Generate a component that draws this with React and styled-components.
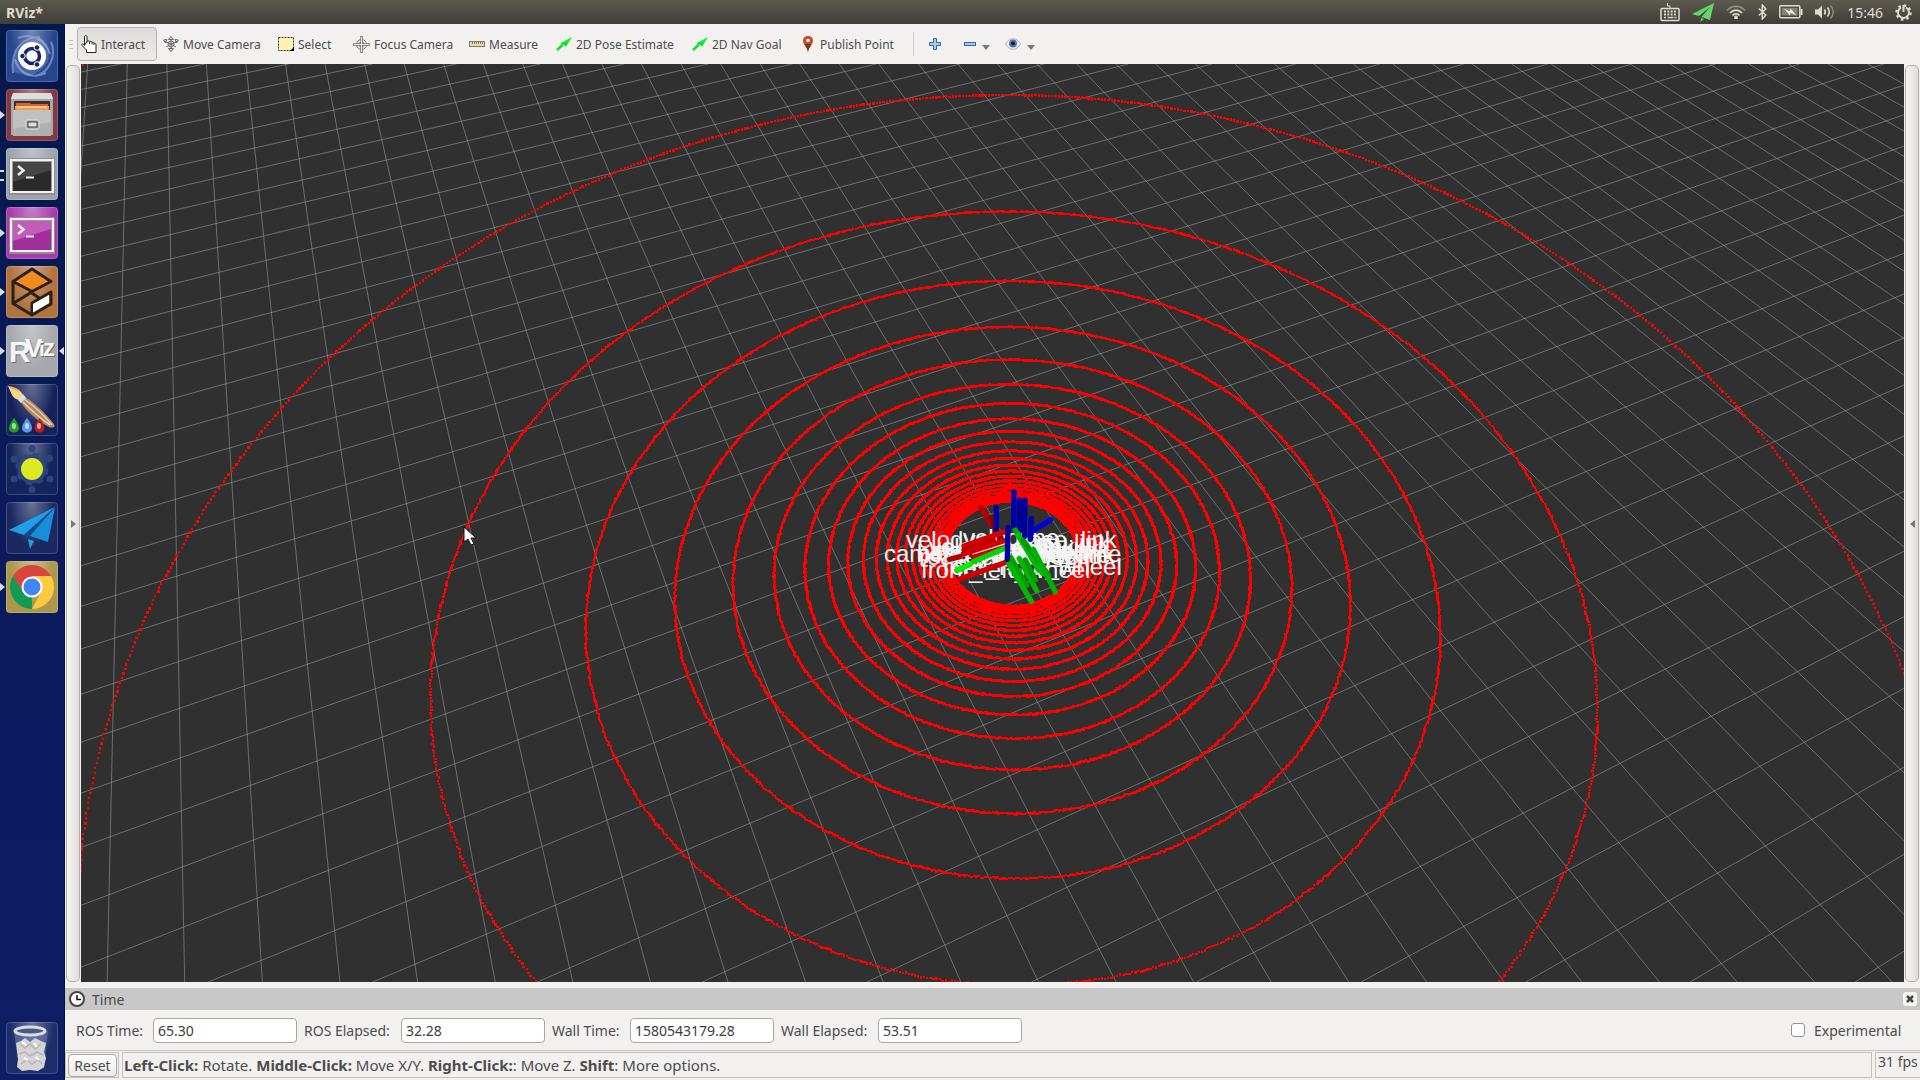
import styled, { createGlobalStyle, css } from 'styled-components';

const GlobalStyle = createGlobalStyle`
  * {
    box-sizing: border-box;
  }

  body {
    margin: 0;
    overflow: hidden;
    background: #f2f1f0;
    color: #4c4c4c;
    font-family: 'Noto Sans', 'Open Sans', sans-serif;
    font-size: 14px;
  }

  button, input {
    font: inherit;
    color: inherit;
  }
`;

/* ---------- scene maths ---------- */

const SCENE_W = 1823;
const SCENE_H = 918;
const FOCAL = 1109;
const SIN_P = 0.7866;
const COS_P = 0.6175;
const HORIZON = -954;

// ground point (x right, z forward, camera height 1) to screen
const project = (x, z) => {
  const depth = z * COS_P + SIN_P;
  return [
    911.5 + (FOCAL * x) / depth,
    459 + (FOCAL * (COS_P - z * SIN_P)) / depth,
  ];
};

const noise = (n) => {
  const s = Math.sin(n * 12.9898) * 43758.5453;
  return s - Math.floor(s) - 0.5;
};

const gridFamily = (vanishX, step, offset, from, to) => {
  let d = '';
  for (let i = from; i <= to; i += 1) {
    const k = step * i + offset;
    const top = vanishX + (0 - HORIZON) * k;
    const bottom = vanishX + (SCENE_H - HORIZON) * k;
    d += `M${top.toFixed(1)} 0L${bottom.toFixed(1)} ${SCENE_H}`;
  }
  return d;
};

const GRID =
  gridFamily(67.3, 0.04146, -0.02201, -3, 48) +
  gridFamily(4742, 0.08799, -2.4653, -31, 12);

const BEAMS = 23;
const POINTS = 1080;

const buildCloud = () => {
  let d = '';
  for (let beam = 0; beam < BEAMS; beam += 1) {
    const angle = ((beam + 1) * 4 * Math.PI) / 540;
    const radius = 1 / (22.94 * Math.tan(angle));
    for (let p = 0; p < POINTS; p += 1) {
      const a = (p * 2 * Math.PI) / POINTS;
      const r = radius + noise(beam * POINTS + p) * 0.0016;
      const [x, y] = project(0.0218 + r * Math.sin(a), 0.744 + r * Math.cos(a));
      if (x > -3 && x < SCENE_W + 3 && y > -3 && y < SCENE_H + 3) {
        d += `M${(x - 1.2).toFixed(1)} ${y.toFixed(1)}h2.4`;
      }
    }
  }
  return d;
};

const CLOUD = buildCloud();

const AXES = [
  ['#b80000', 362, 112, 395, 165],
  ['#8a0000', 392, 142, 420, 205],
  ['#0000a8', 409, 114, 409, 176],
  ['#0000d8', 522, 180, 571, 150],
  ['#0000a0', 478, 90, 478, 176],
  ['#0000a8', 495, 90, 493, 200],
  ['#000090', 486, 100, 486, 180],
  ['#0000b0', 514, 146, 511, 208],
  ['#0000a8', 462, 66, 461, 170],
  ['#d80000', 312, 228, 438, 184],
  ['#c00000', 312, 240, 400, 210],
  ['#d00000', 310, 252, 432, 212],
  ['#b00000', 268, 268, 300, 260],
  ['#c80000', 340, 262, 436, 232],
  ['#00d800', 340, 275, 436, 234],
  ['#00f000', 292, 300, 330, 284],
  ['#d00000', 298, 328, 440, 276],
  ['#00a800', 466, 180, 536, 300],
  ['#00c000', 474, 196, 548, 310],
  ['#009800', 490, 212, 566, 316],
  ['#00b000', 520, 238, 586, 366],
  ['#00a000', 452, 262, 500, 346],
  ['#00b800', 478, 266, 530, 362],
  ['#009c00', 496, 270, 526, 330],
  ['#00b800', 446, 280, 514, 394],
  ['#0000a0', 444, 172, 442, 268],
];

const FRAMES = [
  ['velodyne_base_link', 825, 484],
  ['velodyne', 882, 482],
  ['velodyne_link', 848, 491],
  ['imu_link', 941, 487],
  ['camera_optical_frame', 803, 498],
  ['base_footprint', 836, 497],
  ['camera_link', 899, 495],
  ['base_link', 932, 499],
  ['gps_link', 930, 493],
  ['rear_left_wheel', 838, 501],
  ['rear_axle_frame', 855, 499],
  ['steering_wheel', 850, 495],
  ['front_left_wheel', 840, 514],
  ['rear_right_wheel', 862, 511],
];

/* ---------- drawings ---------- */

const Scene = () => (
  <SceneSvg
    viewBox={`0 0 ${SCENE_W} ${SCENE_H}`}
    preserveAspectRatio="xMidYMid slice"
    role="img"
    aria-label="3D view"
  >
    <path d={GRID} stroke="#a0a0a4" strokeOpacity="0.55" fill="none" />
    <path d={CLOUD} stroke="#f00" strokeWidth="2.4" fill="none" shapeRendering="crispEdges" />
    <g fill="#f4f4f4" fontFamily="'Liberation Sans', sans-serif" fontSize="24">
      {FRAMES.map(([name, x, y]) => (
        <text key={name} x={x} y={y}>{name}</text>
      ))}
    </g>
    <g transform="translate(779 406) scale(0.3333)" strokeWidth="16" strokeLinecap="round">
      {AXES.map(([color, x1, y1, x2, y2]) => (
        <line key={`${x1}-${y1}`} stroke={color} x1={x1} y1={y1} x2={x2} y2={y2} />
      ))}
    </g>
    <path
      d="M383 463v15l4-3 3 6 3-1-3-6h5z"
      fill="#fff"
      stroke="#111"
      strokeWidth="1"
    />
  </SceneSvg>
);

const HandIcon = () => (
  <svg width="16" height="18" viewBox="0 0 16 18">
    <path
      d="M3.5 10.5V2c0-2 2.500-2 2.500 0v5.500M6 6.500c.5-1.200 2.500-1 2.500.5 .5-1 2.500-.8 2.500.7 .5-.8 2-.6 2 .8 .7-.6 2-.3 2 1.200V17.500H5.500V15L1 10.500c-.8-1.500.8-2.200 2.500-.3z"
      fill="#fff"
      stroke="#222"
    />
    <path d="M8.500 7v2M11 7.500v2M13 8.500v1.500" stroke="#222" />
  </svg>
);

const MoveIcon = () => (
  <svg width="16" height="16" viewBox="0 0 16 16" fill="#e8e8e8" stroke="#666">
    <path d="M8 .5l2.500 3h-5zM8 15.500l-2.500-3h5zM.5 4l3.500-.5L2.500 7zM15.500 4L12 3.500 13.500 7z" />
    <path d="M8 3v10M2 5.500l6 2.500 6-2.500M3 11l5-3 5 3" fill="none" />
    <circle cx="8" cy="8" r="3" fill="none" />
  </svg>
);

const SelectIcon = () => (
  <svg width="16" height="14" viewBox="0 0 16 14">
    <rect x=".5" y=".5" width="15" height="13" fill="#fff3ae" stroke="#333" strokeDasharray="2 1" />
    <path d="M16 10v4h-4z" fill="#000" />
  </svg>
);

const FocusIcon = () => (
  <svg width="17" height="17" viewBox="0 0 17 17" fill="none" stroke="#777">
    <circle cx="8.500" cy="8.500" r="5" />
    <circle cx="8.500" cy="8.500" r="2.500" />
    <path d="M8.500 0v17M0 8.500h17" strokeWidth="2.500" />
    <path d="M8.500 1v15M1 8.500h15" stroke="#e8e8e8" />
  </svg>
);

const RulerIcon = () => (
  <svg width="16" height="8" viewBox="0 0 16 8">
    <rect x=".5" y="1.500" width="15" height="5" fill="#e9dca0" stroke="#777" />
    <path d="M3.500 2v2M5.500 2v2M7.500 2v2M9.500 2v2M11.500 2v2M13.500 2v2" stroke="#8a8055" />
  </svg>
);

const ArrowIcon = () => (
  <svg width="16" height="14" viewBox="0 0 16 14">
    <path d="M1 13l6-5.500" stroke="#0be32c" strokeWidth="2.500" />
    <path d="M16 0l-6 10-1.500-2.500L4 6.500z" fill="#0cf030" />
    <path d="M7 6l2 .5.5 2z" fill="#0a6a14" />
  </svg>
);

const PinIcon = () => (
  <svg width="16" height="16" viewBox="0 0 16 16">
    <path d="M8 0c3 0 5 2 5 4.800C13 8.500 9 11 8 16 7 11 3 8.500 3 4.800 3 2 5 0 8 0z" fill="#c94a2c" />
    <path d="M4.500 8C6 10.500 7.500 12 8 16c.5-4 2-5.500 3.500-8z" fill="#6d3a20" />
    <circle cx="8" cy="4.500" r="1.800" fill="#fff" />
  </svg>
);

const PlusIcon = () => (
  <svg width="12" height="12" viewBox="0 0 12 12">
    <path d="M4.500.5h3v4h4v3h-4v4h-3v-4h-4v-3h4z" fill="#a9c8ee" stroke="#3465a4" />
  </svg>
);

const MinusIcon = () => (
  <svg width="12" height="4" viewBox="0 0 12 4">
    <rect x=".5" y=".5" width="11" height="3" fill="#a9c8ee" stroke="#3465a4" />
  </svg>
);

const EyeIcon = () => (
  <svg width="16" height="12" viewBox="0 0 16 12">
    <path d="M.5 6C3 1.500 6 .8 8 .8S13 1.500 15.500 6C13 10.500 10 11.200 8 11.200S3 10.500.5 6z" fill="#eee" stroke="#aaa" />
    <circle cx="8" cy="5.500" r="4" fill="#5a74b0" />
    <circle cx="8" cy="5.500" r="2" fill="#101838" />
  </svg>
);

const ClockIcon = () => (
  <svg width="16" height="16" viewBox="0 0 16 16">
    <circle cx="8" cy="8" r="7" fill="#fff" stroke="#444" strokeWidth="2" />
    <path d="M8 4v4.500h4" stroke="#111" fill="none" strokeWidth="1.500" />
  </svg>
);

const KeyboardIcon = () => (
  <svg width="20" height="20" viewBox="0 0 20 20" fill="none" stroke="#dfdbd2">
    <path d="M10 6V4H7.500V1" />
    <rect x="1" y="6.500" width="18" height="12" rx="1" strokeWidth="1.500" />
    <path d="M4 9.500h12M4 12.500h12" strokeWidth="2" strokeDasharray="2 1.300" />
    <path d="M4 15.500h2M7.500 15.500h6M14.500 15.500h2" strokeWidth="1.500" />
  </svg>
);

const TrayPlaneIcon = () => (
  <svg width="22" height="19" viewBox="0 0 22 19">
    <path d="M22 0L0 11l7 2L18 4 9.500 14l8.500 3zM9 15l-.5 4 3.500-3z" fill="#66d46a" />
  </svg>
);

const WifiIcon = () => (
  <svg width="20" height="14" viewBox="0 0 20 14" fill="none" stroke="#dfdbd2" strokeWidth="1.800">
    <path d="M1 5.500C6 0 14 0 19 5.500" stroke="#8d8a82" />
    <path d="M4 8c3.500-3.800 8.500-3.800 12 0M6.500 10.500c2-2.300 5-2.300 7 0" />
    <circle cx="10" cy="12.500" r="1" fill="#dfdbd2" />
  </svg>
);

const BluetoothIcon = () => (
  <svg width="9" height="16" viewBox="0 0 9 16" fill="none" stroke="#dfdbd2" strokeWidth="1.500">
    <path d="M.8 4.500l7 6.500-3.500 4V1l3.500 4-7 6.500" />
  </svg>
);

const BatteryIcon = () => (
  <svg width="24" height="14" viewBox="0 0 24 14">
    <rect x=".8" y=".8" width="20" height="12" rx="1" fill="none" stroke="#dfdbd2" strokeWidth="1.500" />
    <rect x="3" y="3" width="15.500" height="7.500" fill="#85827a" />
    <path d="M22.500 4v6" stroke="#dfdbd2" strokeWidth="2" />
    <path d="M5 3.500l6 3 .5-3 6 7-6-3-.5 3z" fill="#f0ede6" />
  </svg>
);

const VolumeIcon = () => (
  <svg width="20" height="16" viewBox="0 0 20 16" fill="none" stroke="#dfdbd2" strokeWidth="1.600">
    <path d="M0 5.500h3l4-4v13l-4-4H0z" fill="#dfdbd2" stroke="none" />
    <path d="M9.500 5.500c1 1.500 1 3.500 0 5M12.500 3.500c2.200 2.800 2.200 6.200 0 9" />
    <path d="M15.500 1.500c3.500 4 3.500 9 0 13" stroke="#8d8a82" />
  </svg>
);

const GearIcon = () => (
  <svg width="17" height="17" viewBox="0 0 17 17" fill="none" stroke="#dfdbd2">
    <circle cx="8.500" cy="8.500" r="7" strokeWidth="2.500" strokeDasharray="2.500 3" />
    <path d="M6 3.600a5.500 5.500 0 1 0 5 0" strokeWidth="2" />
    <path d="M8.500 1v7" strokeWidth="2" />
  </svg>
);

const CloseIcon = () => (
  <svg width="8" height="8" viewBox="0 0 8 8">
    <path d="M1 1l6 6M7 1L1 7" stroke="#444" strokeWidth="2.500" />
  </svg>
);

const DashArt = () => (
  <svg viewBox="0 0 52 52">
    <g fill="none" stroke="#9fb4dc" strokeOpacity="0.6">
      <path d="M7 43C4 18 18 7 34 7M45 12c6 14-2 30-15 34M12 8c14-6 28 2 32 16M40 43C24 50 12 42 9 29" strokeWidth="2" />
    </g>
    <path d="M8 42C4 22 18 9 35 8 48 20 46 40 22 46z" fill="#fff" fillOpacity="0.16" />
    <circle cx="26" cy="26" r="14" fill="#fff" />
    <circle cx="26" cy="26" r="7.500" fill="none" stroke="#142a64" strokeWidth="3.500" />
    <g fill="#142a64" stroke="#fff" strokeWidth="1">
      <circle cx="16.500" cy="26" r="2.800" />
      <circle cx="31" cy="17.500" r="2.800" />
      <circle cx="31" cy="34.500" r="2.800" />
    </g>
  </svg>
);

const FilesArt = () => (
  <svg viewBox="0 0 52 52">
    <path d="M7 4h38l2 5v37H5V9z" fill="#a8a8a8" />
    <path d="M7 4h38l2 6H5z" fill="#dedede" />
    <rect x="8" y="12" width="36" height="10" fill="#3a3030" />
    <path d="M10 14h14l1 1h17v7H10z" fill="#d9603a" />
    <path d="M9 17h34v5H9z" fill="#f0a04c" />
    <path d="M11 18h30" stroke="#fff0d0" />
    <rect x="7" y="21" width="38" height="26" fill="#b0b0b0" />
    <path d="M7 21h38v12L7 40z" fill="#c0c0c0" />
    <rect x="20" y="31" width="13" height="9" rx="1" fill="#999" stroke="#e0e0e0" />
    <rect x="22" y="33" width="9" height="5" fill="#ddd" stroke="#444" />
  </svg>
);

const TerminalArt = ({ screen, shine }) => (
  <svg viewBox="0 0 52 52">
    <rect x="3" y="10" width="46" height="37" rx="1" fill="#8f8f8f" />
    <rect x="4" y="11" width="44" height="34" fill="#f2f2f2" />
    <rect x="6" y="13" width="40" height="30" fill="#9a9a9a" />
    <rect x="7" y="14" width="38" height="29" fill={screen} />
    <path d="M7 14h38v8L7 34z" fill={shine} />
    <path d="M12 18l5.500 4.500L12 27" fill="none" stroke="#eee" strokeWidth="2.500" />
    <path d="M20 29.500h8" stroke="#eee" strokeWidth="2" />
  </svg>
);

const GazeboArt = () => (
  <svg viewBox="0 0 52 52" strokeLinejoin="round">
    <path d="M26 3l19 12.500-19 10L7 15.500z" fill="#f58a1f" />
    <path d="M26 3l19 12.500-19 10L7 15.500zM7 15.500v22L26 49M7 37.500l18-11 9 6M26 37v12l19-11V26z" fill="none" stroke="#2a211b" strokeWidth="3" />
    <path d="M27 38l16-9v8l-16 9.500z" fill="#fff" />
  </svg>
);

const RvizArt = () => (
  <svg viewBox="0 0 52 52" fontFamily="'Liberation Sans', sans-serif" fontWeight="bold">
    <g fill="#6f6f6f">
      <text x="4" y="38" fontSize="30">R</text>
      <text x="20" y="33" fontSize="26">V</text>
      <text x="34" y="32" fontSize="21">i</text>
      <text x="38" y="32" fontSize="24">z</text>
    </g>
    <g fill="#f6f6f6">
      <text x="3" y="37" fontSize="30">R</text>
      <text x="19" y="32" fontSize="26">V</text>
      <text x="33" y="31" fontSize="21">i</text>
      <text x="37" y="31" fontSize="24">z</text>
    </g>
  </svg>
);

const BrushArt = () => (
  <svg viewBox="0 0 52 52">
    <path d="M17 12c9 4 22 17 31 28 2 4-2 4-5 3C31 37 20 27 14 17z" fill="#b08a66" />
    <path d="M18 15c9 6 19 15 28 26M17 18c8 8 17 16 27 23" stroke="#e7d2b4" fill="none" strokeWidth="1.500" />
    <path d="M2 2c6 1 12 3 15 9l-4 5C6 15 5 8 2 2z" fill="#f5d58c" />
    <path d="M2 2c6 1 9 2 12 5-5-1-8-2-12-5z" fill="#f5a63c" />
    <path d="M17 10l3 4-5 5-3-3z" fill="#ddd" />
    <path d="M8 34c3 4 5 7 5 10 0 6-10 6-10 0 0-3 2-6 5-10z" fill="#1fa020" />
    <path d="M21 34c3 4 5 7 5 10 0 6-10 6-10 0 0-3 2-6 5-10z" fill="#5a97ee" />
    <path d="M33.500 34c3 4 5 7 5 10 0 6-10 6-10 0 0-3 2-6 5-10z" fill="#b81c22" />
    <g fill="#fff" fillOpacity="0.6">
      <ellipse cx="8" cy="42" rx="2" ry="3" />
      <ellipse cx="21" cy="42" rx="2" ry="3" />
      <ellipse cx="33" cy="42" rx="2" ry="3" />
    </g>
  </svg>
);

const SunArt = () => (
  <svg viewBox="0 0 52 52">
    <g fill="#2c4480">
      <circle cx="26" cy="26" r="14.500" />
      <circle cx="26" cy="26" r="15" fill="none" stroke="#2c4480" strokeWidth="3" strokeDasharray="6 5.800" />
      <circle cx="26" cy="5.500" r="3.500" />
      <circle cx="43.500" cy="15.500" r="3.500" />
      <circle cx="44" cy="36" r="3.500" />
      <circle cx="26" cy="46.500" r="3.500" />
      <circle cx="8" cy="36" r="3.500" />
      <circle cx="8" cy="16" r="3.500" />
    </g>
    <circle cx="26" cy="26" r="11" fill="#dcea20" />
  </svg>
);

const PlaneArt = () => (
  <svg viewBox="0 0 52 52">
    <path d="M49 5L3 28l15 5z" fill="#1f9fe8" />
    <path d="M49 5l-7 35-18-6z" fill="#158fd8" />
    <path d="M49 5L18 33l2 3 3-2z" fill="#0b4f90" />
    <path d="M22 37l6 2-4 8z" fill="#1f9fe8" />
  </svg>
);

const ChromeArt = () => (
  <svg viewBox="0 0 52 52">
    <path d="M7 15a22 22 0 0 1 38 0H26L17 31z" fill="#d9453b" />
    <path d="M7 15l10 16 9 6v11A22 22 0 0 1 7 15z" fill="#139a57" />
    <path d="M45 15a22 22 0 0 1-19 33l9-17-9-16z" fill="#fdca40" />
    <circle cx="26" cy="26" r="10.500" fill="#fff" />
    <circle cx="26" cy="26" r="8.500" fill="#4285f4" />
  </svg>
);

const TrashArt = () => (
  <svg viewBox="0 0 52 52">
    <path d="M8 9h34l-4 38H13z" fill="#8fa0c8" fillOpacity="0.35" />
    <path d="M10 21l5-2 4-3 5 4 5-4 6 3 5 2-2 9 2 6-2 9-6 4-8-1-8 1-5-4 1-8-1-8z" fill="#d4d4d4" />
    <path d="M14 22l5 4 5-4 5 5 6-5M13 32l6-2 5 4 7-4 6 3M15 42l6-4 5 4 6-4 4 4" fill="none" stroke="#b4b4b4" strokeWidth="1.500" />
    <path d="M16 20l4 3M28 21l3 4M18 36l4 2M30 35l3 3" stroke="#fff" strokeWidth="2" />
    <ellipse cx="24" cy="9" rx="15" ry="4" fill="#4a5a88" stroke="#dcdcdc" strokeWidth="3" />
  </svg>
);

/* ---------- data ---------- */

const APPS = [
  { name: 'Search your computer', art: <DashArt />, bg: '#25468f' },
  { name: 'Files', art: <FilesArt />, bg: '#823845', running: 1 },
  { name: 'Terminal', art: <TerminalArt screen="#2a2a2a" shine="#454545" />, bg: '#9ea3ad', running: 2 },
  { name: 'Terminator', art: <TerminalArt screen="#a02e9c" shine="#c05cba" />, bg: '#a93aae', running: 1 },
  { name: 'Gazebo', art: <GazeboArt />, bg: '#b2743f', running: 1 },
  { name: 'RViz', art: <RvizArt />, bg: '#a8a9ac', running: 1, focused: true },
  { name: 'Color picker', art: <BrushArt />, bg: '#14235a' },
  { name: 'Redshift', art: <SunArt />, bg: '#14245c' },
  { name: 'Telegram', art: <PlaneArt />, bg: '#1a2960' },
  { name: 'Google Chrome', art: <ChromeArt />, bg: '#ac984a', running: 1 },
];

const TOOLS = [
  { label: 'Interact', icon: <HandIcon />, width: 80, active: true },
  { label: 'Move Camera', icon: <MoveIcon />, width: 113 },
  { label: 'Select', icon: <SelectIcon />, width: 73 },
  { label: 'Focus Camera', icon: <FocusIcon />, width: 114 },
  { label: 'Measure', icon: <RulerIcon />, width: 85 },
  { label: '2D Pose Estimate', icon: <ArrowIcon />, width: 134 },
  { label: '2D Nav Goal', icon: <ArrowIcon />, width: 106 },
  { label: 'Publish Point', icon: <PinIcon />, width: 110 },
];

const TIMES = [
  { id: 'ros-time', label: 'ROS Time:', value: '65.30', width: 69 },
  { id: 'ros-elapsed', label: 'ROS Elapsed:', value: '32.28', width: 89 },
  { id: 'wall-time', label: 'Wall Time:', value: '1580543179.28', width: 70 },
  { id: 'wall-elapsed', label: 'Wall Elapsed:', value: '53.51', width: 89 },
];

const App = () => {
  return (
    <Desktop>
      <GlobalStyle />
      <TopBar>
        <WindowTitle>RViz*</WindowTitle>
        <Tray>
          <KeyboardIcon />
          <TrayPlaneIcon />
          <WifiIcon />
          <BluetoothIcon />
          <BatteryIcon />
          <VolumeIcon />
          <Clock>15:46</Clock>
          <GearIcon />
        </Tray>
      </TopBar>
      <Body>
        <Launcher>
          {APPS.map((app) => (
            <Tile
              key={app.name}
              aria-label={app.name}
              $bg={app.bg}
              $running={app.running}
              $focused={app.focused}
            >
              {app.art}
            </Tile>
          ))}
          <Spacer />
          <Tile aria-label="Trash" $bg="#1c2d6c">
            <TrashArt />
          </Tile>
        </Launcher>

        <Main>
          <Toolbar>
            <Grip />
            {TOOLS.map((tool) => (
              <ToolButton key={tool.label} $width={tool.width} $active={tool.active}>
                {tool.icon}
                {tool.label}
              </ToolButton>
            ))}
            <Separator />
            <IconButton aria-label="Add tool" $width={38}><PlusIcon /></IconButton>
            <IconButton aria-label="Remove tool" $width={42}>
              <MinusIcon />
              <Caret />
            </IconButton>
            <IconButton aria-label="Views" $width={40}>
              <EyeIcon />
              <Caret />
            </IconButton>
          </Toolbar>

          <ViewRow>
            <SideHandle aria-label="Show left panel"><Triangle /></SideHandle>
            <Scene />
            <SideHandle aria-label="Show right panel"><Triangle $left /></SideHandle>
          </ViewRow>

          <TimeHeader>
            <ClockIcon />
            <TimeTitle>Time</TimeTitle>
            <CloseButton aria-label="Close panel"><CloseIcon /></CloseButton>
          </TimeHeader>

          <TimeRow>
            {TIMES.map((time) => (
              <Field key={time.id}>
                <FieldLabel htmlFor={time.id} $width={time.width}>{time.label}</FieldLabel>
                <FieldInput id={time.id} defaultValue={time.value} />
              </Field>
            ))}
            <Spacer />
            <Check type="checkbox" id="experimental" />
            <FieldLabel htmlFor="experimental" $width={90}>Experimental</FieldLabel>
          </TimeRow>

          <StatusBar>
            <StatusCell>
              <ResetButton>Reset</ResetButton>
            </StatusCell>
            <StatusHelp>
              <b>Left-Click:</b> Rotate. <b>Middle-Click:</b> Move X/Y. <b>Right-Click:</b>: Move Z. <b>Shift</b>: More options.
            </StatusHelp>
            <StatusFps>31 fps</StatusFps>
          </StatusBar>
        </Main>
      </Body>
    </Desktop>
  );
};

/* ---------- styles ---------- */

const Desktop = styled.div`
  display: flex;
  flex-direction: column;
  height: 100vh;
`;

const TopBar = styled.header`
  display: flex;
  align-items: center;
  justify-content: space-between;
  height: 24px;
  flex: none;
  padding: 0 8px 0 6px;
  background: linear-gradient(#5d5a50, #3e3d38);
  color: #dfdbd2;
`;

const WindowTitle = styled.span`
  font-weight: bold;
`;

const Tray = styled.div`
  display: flex;
  align-items: center;
  gap: 12px;
`;

const Clock = styled.time`
  font-size: 14px;
`;

const Body = styled.div`
  display: flex;
  flex: 1;
  min-height: 0;
`;

const Launcher = styled.nav`
  display: flex;
  flex-direction: column;
  gap: 7px;
  width: 65px;
  flex: none;
  padding: 6px;
  background: linear-gradient(#03184b, #0a1a5a 40%, #0d1e66);
  border-right: 1px solid #06113a;
`;

const Tile = styled.button`
  position: relative;
  width: 52px;
  height: 52px;
  flex: none;
  padding: 0;
  border: none;
  border-radius: 4px;
  background: radial-gradient(ellipse at 50% 0, rgba(255, 255, 255, 0.35), transparent 60%), ${({ $bg }) => $bg};
  box-shadow: inset 0 0 0 1px rgba(255, 255, 255, 0.18);

  svg {
    display: block;
    width: 52px;
    height: 52px;
  }

  ${({ $running }) => $running === 1 && css`
    &::before {
      content: '';
      position: absolute;
      left: -6px;
      top: 22px;
      border: 4px solid transparent;
      border-left: 5px solid #d8dce6;
      border-right: none;
    }
  `}

  ${({ $running }) => $running === 2 && css`
    &::before {
      content: '';
      position: absolute;
      left: -6px;
      top: 22px;
      width: 4px;
      height: 7px;
      border: solid #d8dce6;
      border-width: 2px 0;
    }
  `}

  ${({ $focused }) => $focused && css`
    &::after {
      content: '';
      position: absolute;
      right: -6px;
      top: 22px;
      border: 4px solid transparent;
      border-right: 5px solid #d8dce6;
      border-left: none;
    }
  `}
`;

const Spacer = styled.div`
  flex: 1;
`;

const Main = styled.main`
  display: flex;
  flex-direction: column;
  flex: 1;
  min-width: 0;
  background: #f2f1f0;
`;

const Toolbar = styled.div`
  display: flex;
  align-items: center;
  gap: 2px;
  height: 40px;
  flex: none;
  padding-left: 4px;
`;

const Grip = styled.span`
  width: 4px;
  height: 9px;
  margin-right: 2px;
  background: repeating-linear-gradient(#c4c2c0 0 1px, transparent 1px 4px);
`;

const ToolButton = styled.button`
  display: flex;
  align-items: center;
  gap: 4px;
  width: ${({ $width }) => $width}px;
  height: 34px;
  padding: 0 0 0 3px;
  border: 1px solid ${({ $active }) => ($active ? '#b4b1ad' : 'transparent')};
  border-radius: 4px;
  background: ${({ $active }) => ($active ? 'linear-gradient(#dddcda, #ecebe9)' : 'none')};
  font-size: 12px;
  white-space: nowrap;

  svg {
    flex: none;
  }
`;

const Separator = styled.span`
  width: 1px;
  height: 24px;
  margin-left: 5px;
  background: #d3d1cf;
`;

const IconButton = styled.button`
  display: flex;
  align-items: center;
  justify-content: center;
  gap: 6px;
  width: ${({ $width }) => $width}px;
  height: 34px;
  padding: 0;
  border: none;
  background: none;
`;

const Caret = styled.span`
  margin-top: 6px;
  border: 4px solid transparent;
  border-top: 5px solid #777;
  border-bottom: none;
`;

const ViewRow = styled.div`
  display: flex;
  flex: 1;
  min-height: 0;
`;

const SceneSvg = styled.svg`
  display: block;
  flex: 1;
  min-width: 0;
  background: #303030;
`;

const SideHandle = styled.button`
  display: flex;
  align-items: center;
  justify-content: center;
  width: 14px;
  flex: none;
  margin: 1px 1px 0;
  padding: 0;
  border: 1px solid #b3b0ac;
  border-radius: 5px;
  background: linear-gradient(to right, #f6f5f4, #dedddb);
`;

const Triangle = styled.span`
  border: 4px solid transparent;
  border-left: 5px solid #777;
  border-right: none;
  transform: ${({ $left }) => ($left ? 'scaleX(-1)' : 'none')};
`;

const TimeHeader = styled.div`
  display: flex;
  align-items: center;
  height: 22px;
  flex: none;
  margin-top: 6px;
  padding: 0 3px 0 4px;
  background: #c8c8c8;
`;

const TimeTitle = styled.span`
  flex: 1;
  padding-left: 7px;
`;

const CloseButton = styled.button`
  display: flex;
  align-items: center;
  justify-content: center;
  width: 14px;
  height: 14px;
  padding: 0;
  border: none;
  border-radius: 3px;
  background: #f4f4f3;
`;

const TimeRow = styled.div`
  display: flex;
  align-items: center;
  height: 41px;
  flex: none;
  padding: 0 16px 0 11px;
  border-bottom: 1px solid #c9c7c5;
`;

const Field = styled.div`
  display: flex;
  align-items: center;
  gap: 8px;
  margin-right: 7px;
`;

const FieldLabel = styled.label`
  width: ${({ $width }) => $width}px;
  white-space: nowrap;
`;

const FieldInput = styled.input`
  width: 144px;
  height: 25px;
  padding: 0 4px;
  border: 1px solid #aaa7a2;
  border-radius: 4px;
  background: #fff;
  color: #3c3c3c;
`;

const Check = styled.input`
  appearance: none;
  width: 14px;
  height: 14px;
  margin: 0 9px 0 0;
  border: 1px solid #989590;
  border-radius: 3px;
  background: #fff;
`;

const StatusBar = styled.footer`
  display: flex;
  gap: 3px;
  height: 29px;
  flex: none;
  padding: 1px 0 2px;
`;

const StatusCell = styled.div`
  display: flex;
  align-items: center;
  padding: 0 1px 0 2px;
  border: 1px solid #c4c2c0;
`;

const ResetButton = styled.button`
  width: 49px;
  height: 23px;
  padding: 0;
  border: 1px solid #aaa7a2;
  border-radius: 4px;
  background: linear-gradient(#fdfdfc, #ecebea);
`;

const StatusHelp = styled.div`
  flex: 1;
  padding-left: 1px;
  border: 1px solid #c4c2c0;
  font-size: 15px;
  line-height: 24px;
  white-space: pre;
`;

const StatusFps = styled.div`
  width: 45px;
  padding-left: 2px;
  border: 1px solid #c4c2c0;
  border-right: none;
  line-height: 18px;
  white-space: nowrap;
`;

export default App;
